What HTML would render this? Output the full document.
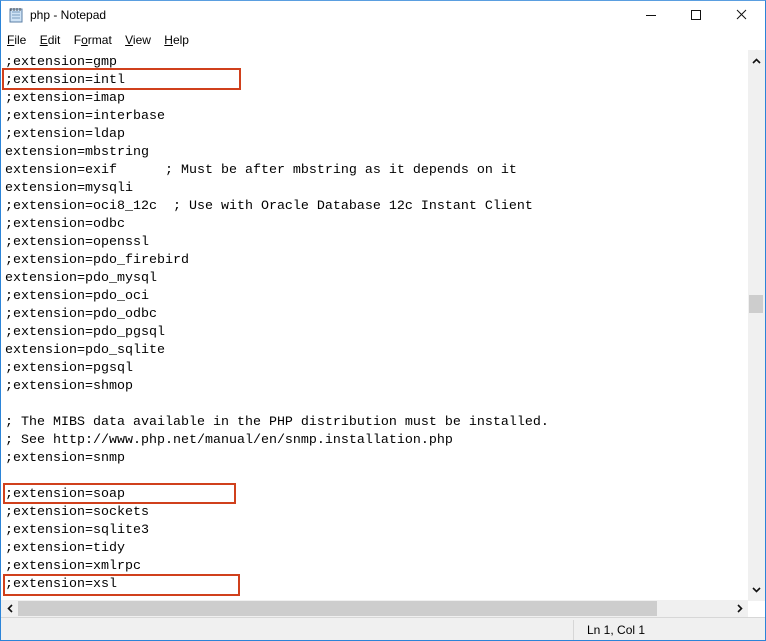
<!DOCTYPE html><html><head><style>
*{margin:0;padding:0;box-sizing:border-box}
body{width:766px;height:641px;overflow:hidden;background:#fff;font-family:"Liberation Sans",sans-serif;position:relative}
.win{position:absolute;left:0;top:0;width:766px;height:641px;border:1px solid #2b84d8;border-top-color:#5a9ee0}
.title{position:absolute;left:30px;top:8px;font-size:12px;color:#000}
.menu{position:absolute;left:7px;top:33px;font-size:12px}
.menu span{margin-right:10px}
.txt{position:absolute;left:5px;top:54px;font-family:"Liberation Mono",monospace;font-size:13.33px;line-height:18px;white-space:pre;color:#000}
.box{position:absolute;border:2px solid #d0401c}
.vs{position:absolute;left:748px;top:50px;width:17px;height:551px;background:#f0f0f0}
.hs{position:absolute;left:1px;top:600px;width:747px;height:17px;background:#f0f0f0}
.sb{position:absolute;left:1px;top:617px;width:764px;height:23px;background:#f0f0f0;border-top:1px solid #d7d7d7}
.ctl{position:absolute;font-size:12px;color:#000}
</style></head><body><div class="win"></div>
<svg style="position:absolute;left:8px;top:7px" width="16" height="16"><rect x="2" y="2" width="12" height="13" fill="#cfe3f5" stroke="#5b7fa6"/><path d="M4 5h8M4 8h8M4 11h8" stroke="#7a9cc0"/><path d="M3 1v3M6 1v3M9 1v3M12 1v3" stroke="#555"/></svg>
<div class="title">php - Notepad</div>
<svg style="position:absolute;left:640px;top:0" width="126" height="30"><path d="M6 15.5h10" stroke="#111"/><rect x="51.5" y="10.5" width="9" height="9" fill="none" stroke="#111"/><path d="M97 10l9 9M106 10l-9 9" stroke="#111"/></svg>
<div class="menu"><span><u>F</u>ile</span> <span><u>E</u>dit</span> <span>F<u>o</u>rmat</span> <span><u>V</u>iew</span> <span><u>H</u>elp</span></div>
<div class="txt">;extension=gmp
;extension=intl
;extension=imap
;extension=interbase
;extension=ldap
extension=mbstring
extension=exif      ; Must be after mbstring as it depends on it
extension=mysqli
;extension=oci8_12c  ; Use with Oracle Database 12c Instant Client
;extension=odbc
;extension=openssl
;extension=pdo_firebird
extension=pdo_mysql
;extension=pdo_oci
;extension=pdo_odbc
;extension=pdo_pgsql
extension=pdo_sqlite
;extension=pgsql
;extension=shmop

; The MIBS data available in the PHP distribution must be installed.
; See http://www.php.net/manual/en/snmp.installation.php
;extension=snmp

;extension=soap
;extension=sockets
;extension=sqlite3
;extension=tidy
;extension=xmlrpc
;extension=xsl</div>
<div class="box" style="left:2px;top:68px;width:239px;height:22px"></div>
<div class="box" style="left:3px;top:483px;width:233px;height:21px"></div>
<div class="box" style="left:3px;top:574px;width:237px;height:22px"></div>
<div class="vs"><div style="position:absolute;left:1px;top:245px;width:14px;height:18px;background:#cdcdcd"></div>
<svg style="position:absolute;left:0;top:0" width="17" height="551"><path d="M5 13l3.5-3.5 3.5 3.5" stroke="#111" stroke-width="1.6" fill="none"/><path d="M5 538l3.5 3.5 3.5-3.5" stroke="#111" stroke-width="1.6" fill="none"/></svg></div>
<div class="hs"><div style="position:absolute;left:17px;top:1px;width:639px;height:15px;background:#cdcdcd"></div>
<svg style="position:absolute;left:0;top:0" width="747" height="17"><path d="M11 5l-3.5 3.5 3.5 3.5" stroke="#111" stroke-width="1.6" fill="none"/><path d="M737 5l3.5 3.5-3.5 3.5" stroke="#111" stroke-width="1.6" fill="none"/></svg></div>
<div class="sb"><div style="position:absolute;left:572px;top:2px;width:1px;height:20px;background:#d7d7d7"></div><div class="ctl" style="left:586px;top:5px">Ln 1, Col 1</div></div>
</body></html>
